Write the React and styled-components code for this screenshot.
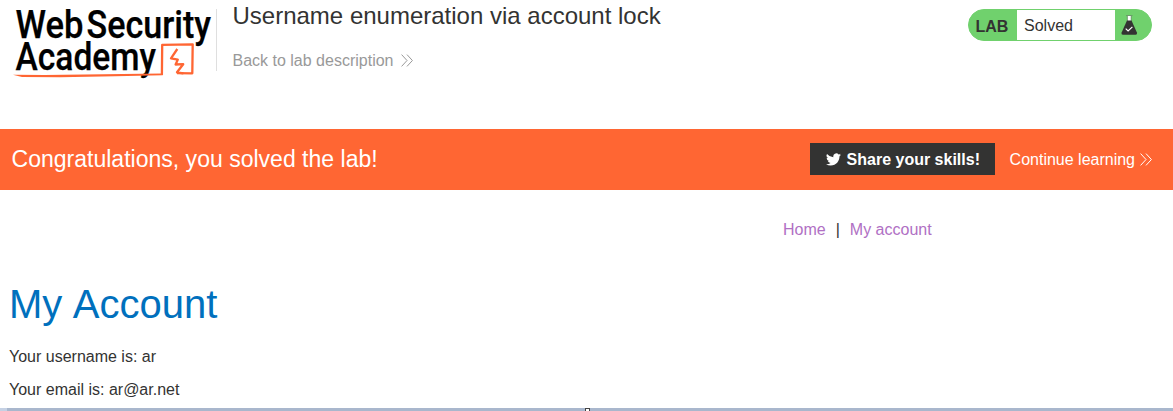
import React from 'react';
import styled, { createGlobalStyle } from 'styled-components';

const GlobalStyle = createGlobalStyle`
  * { box-sizing: border-box; }
  body {
    margin: 0;
    background: #fff;
    color: #333332;
    font: 16px/20px "Liberation Sans", Arial, sans-serif;
    overflow: hidden;
  }
  h1, h2, h4, p { margin: 0; font-weight: 400; }
  a { text-decoration: none; color: inherit; }
`;

const Page = styled.div`
  display: flex;
  flex-direction: column;
  height: 411px;
`;

const Header = styled.header`
  display: flex;
  align-items: flex-start;
  height: 129px;
  padding: 0 21px 0 12px;
`;

const Logo = styled.svg`
  display: block;
  width: 204px;
  height: 82px;
  flex: none;
  overflow: visible;
`;

const TitleBlock = styled.div`
  display: flex;
  flex-direction: column;
  flex: 1;
  height: 62px;
  margin-top: 9px;
  padding-left: 15.5px;
  border-left: 1px solid #dfdfdf;
`;

const Title = styled.h2`
  font-size: 24px;
  line-height: 28px;
  margin-top: -7px;
`;

const BackLink = styled.a`
  display: flex;
  align-items: center;
  gap: 8px;
  margin-top: 21px;
  color: #999;
`;

const Chevrons = styled.svg`
  display: block;
  width: 12px;
  height: 13px;
  margin-top: -1px;
  fill: none;
  stroke: currentColor;
  stroke-width: 1;
`;

const Status = styled.div`
  display: flex;
  width: 184px;
  height: 32px;
  margin-top: 9px;
  border: 1px solid #70d16d;
  border-radius: 16px;
  background: #70d16d;
  overflow: hidden;
`;

const StatusLabel = styled.span`
  width: 48px;
  padding-left: 6.5px;
  font-weight: 700;
  line-height: 33px;
`;

const StatusText = styled.span`
  width: 98px;
  padding-left: 7px;
  background: #fff;
  line-height: 31px;
`;

const Flask = styled.svg`
  display: block;
  width: 18px;
  height: 22px;
  margin: 4px 0 0 5px;
`;

const Banner = styled.section`
  display: flex;
  align-items: flex-start;
  height: 61px;
  padding: 14px 21px 0 11.5px;
  background: #ff6633;
  color: #fff;
`;

const BannerTitle = styled.h4`
  flex: 1;
  font-size: 23.04px;
  line-height: 32px;
`;

const ShareButton = styled.a`
  display: flex;
  align-items: center;
  gap: 6px;
  width: 185px;
  height: 32px;
  margin-right: 15px;
  padding: 1px 0 0 16px;
  background: #333332;
  font-weight: 700;
`;

const Bird = styled.svg`
  display: block;
  width: 15px;
  height: 15px;
  fill: #fff;
`;

const ContinueLink = styled.a`
  display: flex;
  align-items: center;
  gap: 4.5px;
  height: 33px;
  padding-right: 0.5px;
`;

const Nav = styled.nav`
  display: flex;
  gap: 10px;
  margin-top: 30px;
  padding-left: 783px;
`;

const NavLink = styled.a`
  color: #b070c4;
`;

const Account = styled.main`
  flex: 1;
  padding: 40px 9px 0;
`;

const Heading = styled.h1`
  color: #0070bd;
  font-size: 40px;
  line-height: 48px;
  word-spacing: 1.5px;
`;

const Detail = styled.p`
  margin-top: ${({ $first }) => ($first ? '19px' : '13px')};
`;

const FrameEdge = styled.footer`
  display: flex;
  justify-content: center;
  height: 3px;
  padding-left: 2px;
  background: linear-gradient(90deg, #c5d1e4 7px, #a9b7cd 7px);
`;

const FrameHandle = styled.span`
  width: 5px;
  height: 3px;
  border: 1px solid #444;
  border-bottom: 0;
  background: #fff;
`;

function DoubleChevron() {
  return (
    <Chevrons viewBox="0 0 12 13">
      <path d="M.6.6 6 6.5.6 12.4M6 .6l5.4 5.9L6 12.4" />
    </Chevrons>
  );
}

function AcademyLogo() {
  return (
    <Logo viewBox="12 0 204 82" role="img" aria-label="Web Security Academy">
      <g fill="#000" stroke="#000" strokeWidth=".25" fontFamily="Roboto, sans-serif" fontSize="38" fontWeight="500">
        <text x="15.5" y="37.5" textLength="68" lengthAdjust="spacingAndGlyphs">Web</text>
        <text x="86.5" y="37.5" textLength="124.5" lengthAdjust="spacingAndGlyphs">Security</text>
        <text x="15.5" y="70.3" textLength="140.5" lengthAdjust="spacingAndGlyphs">Academy</text>
      </g>
      <g fill="none" stroke="#ff6633" strokeLinejoin="round">
        <path d="M161.9 75 162.2 44.9 192.7 44.3 192.3 73.3 177 73.2" strokeWidth="2.3" />
        <path d="M177.3 49 171 58.3 177.8 59.6 175.6 64.5 183.2 64.2 177 72.3 183.4 73.4" strokeWidth="2.3" />
      </g>
      <path fill="#ff6633" d="M13 74.7 45 75 162 73.4 162.8 75.2 115 76.3 60 77.3 22 77Z" />
    </Logo>
  );
}

export default function App() {
  return (
    <Page>
      <GlobalStyle />
      <Header>
        <AcademyLogo />
        <TitleBlock>
          <Title>Username enumeration via account lock</Title>
          <BackLink>Back to lab description <DoubleChevron /></BackLink>
        </TitleBlock>
        <Status>
          <StatusLabel>LAB</StatusLabel>
          <StatusText>Solved</StatusText>
          <Flask viewBox="0 0 18 22">
            <path d="M7.5 2h3.5v5H7.5z" fill="#fff" />
            <path d="M6 1.5h6.5M7.3 2v5M11.2 2v5" stroke="#6b8f69" strokeWidth=".8" fill="none" />
            <path d="M7 6.5h4.5L17 18.8q.4 2-1.4 2H2.9q-1.8 0-1.4-2Z" fill="#333332" />
            <path d="m5.7 14.6 2.4 2.3 4.3-4" stroke="#fff" strokeWidth="1.2" fill="none" />
          </Flask>
        </Status>
      </Header>
      <Banner>
        <BannerTitle>Congratulations, you solved the lab!</BannerTitle>
        <ShareButton>
          <Bird viewBox="0 0 24 24">
            <path d="M23.95 4.57a10 10 0 0 1-2.82.77 4.96 4.96 0 0 0 2.16-2.72c-.95.55-2 .95-3.13 1.18a4.92 4.92 0 0 0-8.38 4.48A13.93 13.93 0 0 1 1.64 3.16a4.92 4.92 0 0 0 1.52 6.57 4.9 4.9 0 0 1-2.23-.61v.06a4.92 4.92 0 0 0 3.95 4.83 5 5 0 0 1-2.21.08 4.94 4.94 0 0 0 4.6 3.42A9.87 9.87 0 0 1 0 19.54a14 14 0 0 0 7.55 2.21c9.05 0 14-7.5 14-13.98 0-.21 0-.42-.02-.63a9.94 9.94 0 0 0 2.46-2.55Z" />
          </Bird>
          Share your skills!
        </ShareButton>
        <ContinueLink>Continue learning <DoubleChevron /></ContinueLink>
      </Banner>
      <Nav>
        <NavLink>Home</NavLink>
        <span>|</span>
        <NavLink>My account</NavLink>
      </Nav>
      <Account>
        <Heading>My Account</Heading>
        <Detail $first>Your username is: ar</Detail>
        <Detail>Your email is: ar@ar.net</Detail>
      </Account>
      <FrameEdge><FrameHandle /></FrameEdge>
    </Page>
  );
}
